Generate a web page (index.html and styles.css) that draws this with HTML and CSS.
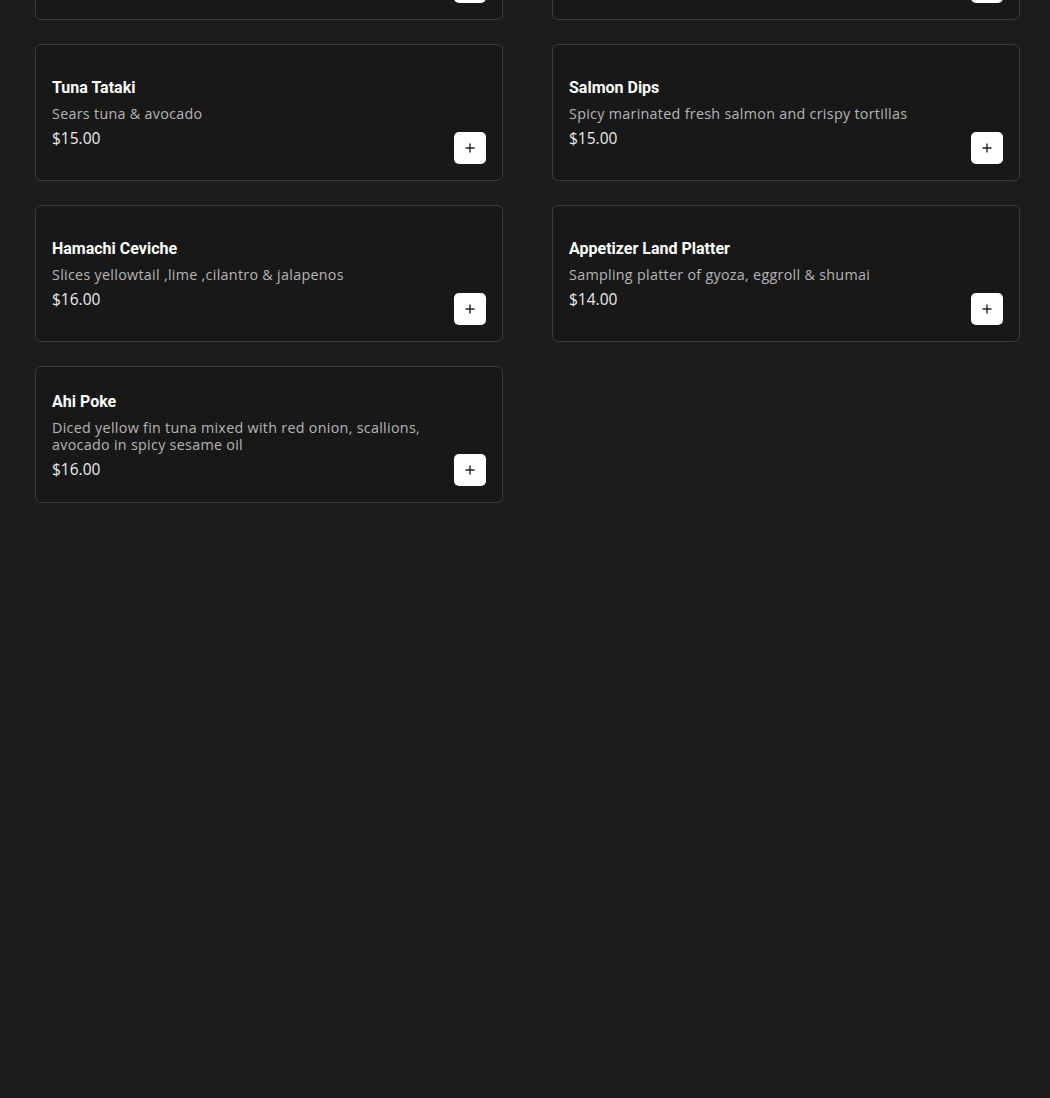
FILE: index.html
```html
<!DOCTYPE html>
<html lang="en">
<head>
<meta charset="utf-8">
<title>Menu</title>
<link rel="stylesheet" href="styles.css">
</head>
<body>
<main class="menu">
  <div class="grid">
    <article class="card">
      <div class="info">
        <h3 class="name">Edamame</h3>
        <p class="desc">Steamed soybeans with sea salt</p>
        <p class="price">$8.00</p>
      </div>
      <button class="add" aria-label="Add"><svg viewBox="0 0 10 10" width="10" height="10"><path d="M5 0.5v9M0.5 5h9" stroke="#222" stroke-width="1.4" fill="none"/></svg></button>
    </article>
    <article class="card">
      <div class="info">
        <h3 class="name">Gyoza</h3>
        <p class="desc">Pan fried pork dumplings</p>
        <p class="price">$9.00</p>
      </div>
      <button class="add" aria-label="Add"><svg viewBox="0 0 10 10" width="10" height="10"><path d="M5 0.5v9M0.5 5h9" stroke="#222" stroke-width="1.4" fill="none"/></svg></button>
    </article>
    <article class="card">
      <div class="info">
        <h3 class="name">Tuna Tataki</h3>
        <p class="desc">Sears tuna &amp; avocado</p>
        <p class="price">$15.00</p>
      </div>
      <button class="add" aria-label="Add"><svg viewBox="0 0 10 10" width="10" height="10"><path d="M5 0.5v9M0.5 5h9" stroke="#222" stroke-width="1.4" fill="none"/></svg></button>
    </article>
    <article class="card">
      <div class="info">
        <h3 class="name">Salmon Dips</h3>
        <p class="desc">Spicy marinated fresh salmon and crispy tortillas</p>
        <p class="price">$15.00</p>
      </div>
      <button class="add" aria-label="Add"><svg viewBox="0 0 10 10" width="10" height="10"><path d="M5 0.5v9M0.5 5h9" stroke="#222" stroke-width="1.4" fill="none"/></svg></button>
    </article>
    <article class="card">
      <div class="info">
        <h3 class="name">Hamachi Ceviche</h3>
        <p class="desc">Slices yellowtail ,lime ,cilantro &amp; jalapenos</p>
        <p class="price">$16.00</p>
      </div>
      <button class="add" aria-label="Add"><svg viewBox="0 0 10 10" width="10" height="10"><path d="M5 0.5v9M0.5 5h9" stroke="#222" stroke-width="1.4" fill="none"/></svg></button>
    </article>
    <article class="card">
      <div class="info">
        <h3 class="name">Appetizer Land Platter</h3>
        <p class="desc">Sampling platter of gyoza, eggroll &amp; shumai</p>
        <p class="price">$14.00</p>
      </div>
      <button class="add" aria-label="Add"><svg viewBox="0 0 10 10" width="10" height="10"><path d="M5 0.5v9M0.5 5h9" stroke="#222" stroke-width="1.4" fill="none"/></svg></button>
    </article>
    <article class="card">
      <div class="info">
        <h3 class="name">Ahi Poke</h3>
        <p class="desc">Diced yellow fin tuna mixed with red onion, scallions, avocado in spicy sesame oil</p>
        <p class="price">$16.00</p>
      </div>
      <button class="add" aria-label="Add"><svg viewBox="0 0 10 10" width="10" height="10"><path d="M5 0.5v9M0.5 5h9" stroke="#222" stroke-width="1.4" fill="none"/></svg></button>
    </article>
  </div>
</main>
</body>
</html>
```
FILE: styles.css
```css
html, body {
  margin: 0;
  padding: 0;
  background: #1c1c1c;
  height: 100%;
  overflow: hidden;
}
body {
  font-family: "Open Sans", "Liberation Sans", sans-serif;
  color: #fff;
}
.menu {
  padding: 0 30px 0 35px;
}
.grid {
  display: grid;
  grid-template-columns: 468px 468px;
  column-gap: 49px;
  row-gap: 24px;
  margin-top: -117px;
}
.card {
  box-sizing: border-box;
  height: 137px;
  border: 1px solid #3b3b3b;
  border-radius: 6px;
  background: #181818;
  padding: 16px;
  display: flex;
  align-items: center;
  justify-content: space-between;
}
.info {
  flex: 1;
  padding-right: 30px;
}
.name {
  margin: 0 0 7px;
  font-family: Roboto, "Liberation Sans", sans-serif;
  font-weight: 700;
  font-size: 16px;
  line-height: 21px;
  color: #fff;
}
.desc {
  margin: 0 0 6px;
  font-size: 14.3px;
  line-height: 17px;
  color: #b6b6b6;
  letter-spacing: 0.3px;
}
.price {
  margin: 0;
  font-size: 15.5px;
  line-height: 20px;
  color: #ececec;
}
.add {
  align-self: flex-end;
  width: 32px;
  height: 32px;
  flex: none;
  border: 0;
  border-radius: 5px;
  background: #fff;
  padding: 0;
  display: flex;
  align-items: center;
  justify-content: center;
  cursor: pointer;
}
```
